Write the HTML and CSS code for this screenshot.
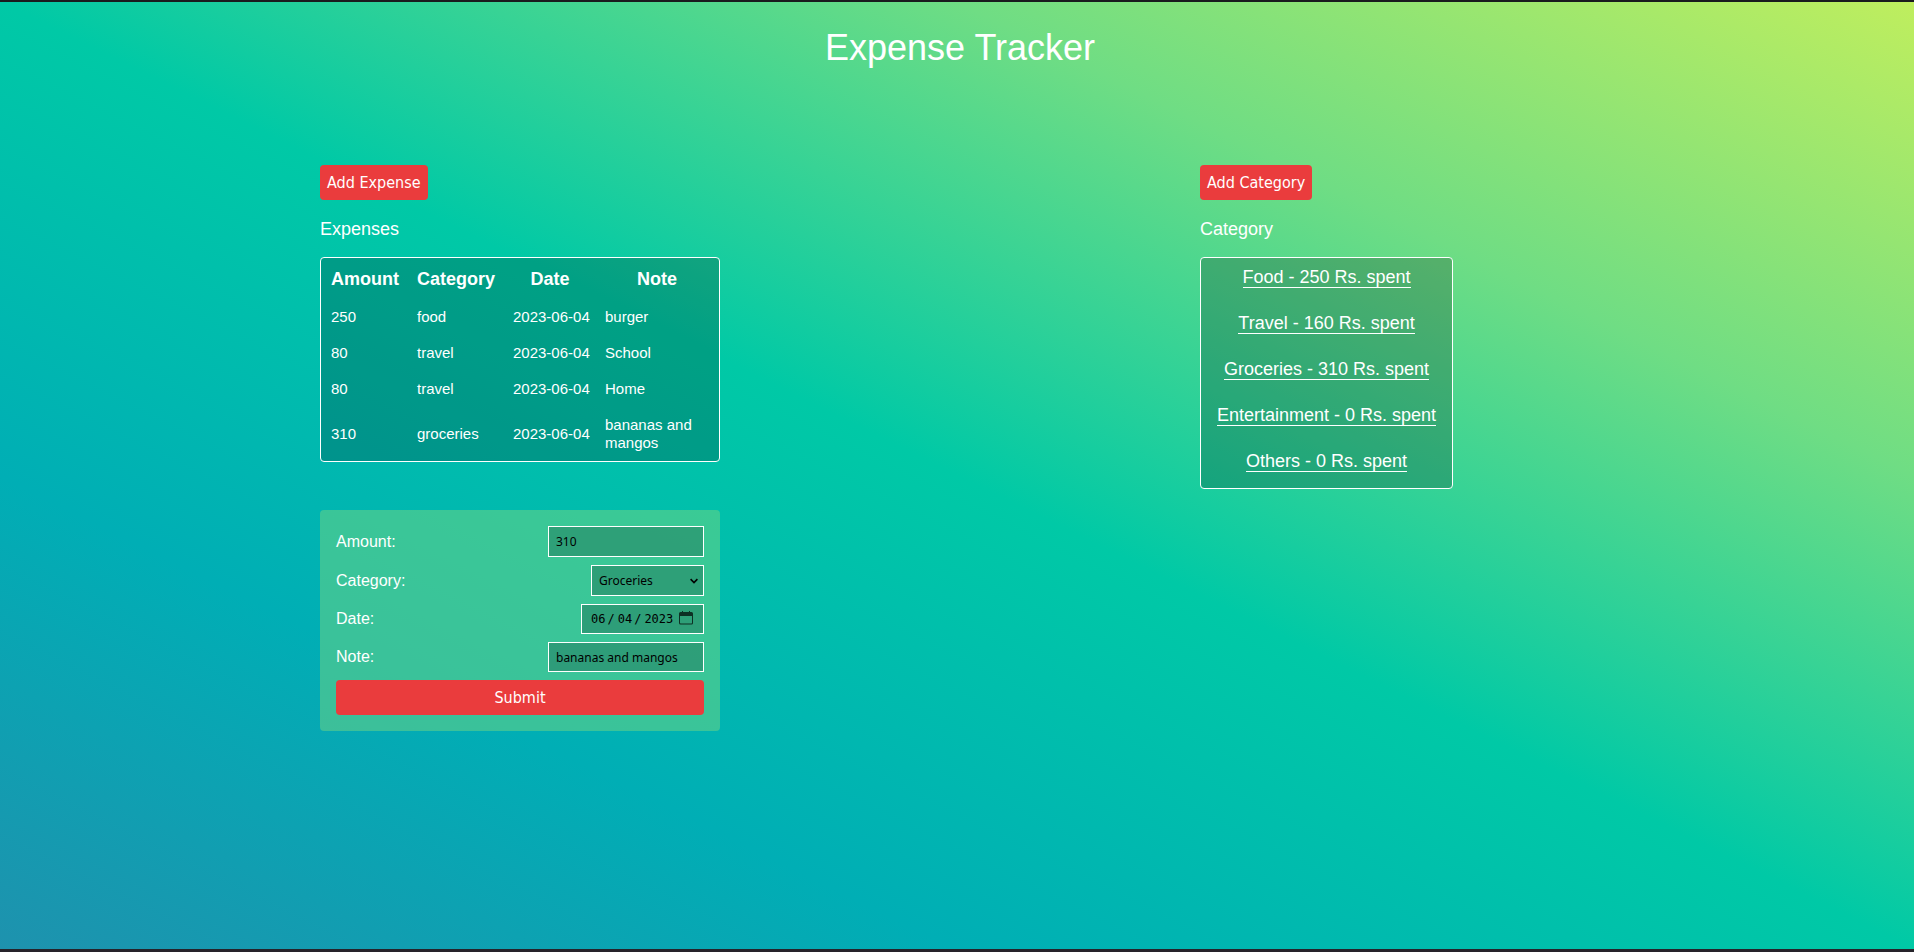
FILE: index.html
```html
<!DOCTYPE html>
<html lang="en">
<head>
<meta charset="utf-8">
<meta name="viewport" content="width=device-width, initial-scale=1">
<title>Expense Tracker</title>
<link rel="stylesheet" href="styles.css">
</head>
<body>
<div class="page">
  <header class="header">
    <h1 class="title">Expense Tracker</h1>
  </header>
  <main class="content">
    <section class="expenses">
      <button class="button" type="button">Add Expense</button>
      <h2 class="heading">Expenses</h2>
      <table class="table">
        <colgroup>
          <col class="col-amount">
          <col class="col-category">
          <col class="col-date">
          <col>
        </colgroup>
        <thead>
          <tr><th>Amount</th><th>Category</th><th>Date</th><th>Note</th></tr>
        </thead>
        <tbody>
          <tr><td>250</td><td>food</td><td class="date">2023-06-04</td><td>burger</td></tr>
          <tr><td>80</td><td>travel</td><td class="date">2023-06-04</td><td>School</td></tr>
          <tr><td>80</td><td>travel</td><td class="date">2023-06-04</td><td>Home</td></tr>
          <tr><td>310</td><td>groceries</td><td class="date">2023-06-04</td><td>bananas and mangos</td></tr>
        </tbody>
      </table>
      <form class="form">
        <div class="row">
          <label for="amount">Amount:</label>
          <input class="field field-text" id="amount" type="text" inputmode="numeric" value="310">
        </div>
        <div class="row">
          <label for="category">Category:</label>
          <span class="select-wrap">
            <select class="field field-select" id="category">
              <option>Food</option>
              <option>Travel</option>
              <option selected>Groceries</option>
              <option>Entertainment</option>
              <option>Others</option>
            </select>
            <svg class="chevron" viewBox="0 0 8 6" aria-hidden="true"><path d="M.6 1.1L4 4.5l3.4-3.4" fill="none" stroke="#000" stroke-width="1.6"/></svg>
          </span>
        </div>
        <div class="row">
          <label for="date">Date:</label>
          <input class="field field-date" id="date" type="date" value="2023-06-04">
        </div>
        <div class="row">
          <label for="note">Note:</label>
          <input class="field field-text field-short" id="note" type="text" value="bananas and mangos">
        </div>
        <button class="button" type="button">Submit</button>
      </form>
    </section>
    <section class="categories">
      <button class="button" type="button">Add Category</button>
      <h2 class="heading">Category</h2>
      <div class="list">
        <a class="item" href="#food">Food - 250 Rs. spent</a>
        <a class="item" href="#travel">Travel - 160 Rs. spent</a>
        <a class="item" href="#groceries">Groceries - 310 Rs. spent</a>
        <a class="item" href="#entertainment">Entertainment - 0 Rs. spent</a>
        <a class="item" href="#others">Others - 0 Rs. spent</a>
      </div>
    </section>
  </main>
</div>
</body>
</html>
```
FILE: styles.css
```css
* {
  box-sizing: border-box;
}

body {
  margin: 0;
  color: #fff;
  font-family: "Liberation Sans", Arial, sans-serif;
  font-size: 16px;
}

.page {
  min-height: 100vh;
  border-top: 2px solid #1a1b1e;
  border-bottom: 3px solid #26232a;
  background: linear-gradient(to right top, #1e92ae, #00aeb5, #00c9a6, #6fdd84, #bfee5e) padding-box;
}

.header {
  padding: 24px 8px 96px 14px;
  text-align: center;
}

.title {
  margin: 0;
  font-size: 36px;
  font-weight: 400;
  line-height: 43px;
}

.content {
  display: flex;
  gap: 480px;
  padding: 0 16px 48px 320px;
}

.expenses {
  flex: 0 0 400px;
}

.heading {
  margin: 18px 0 16px;
  font-size: 18px;
  font-weight: 400;
  line-height: 23px;
}

.button {
  display: block;
  height: 35px;
  padding: 1px 7px 0;
  border: 0;
  border-radius: 4px;
  background: #ea3c3d;
  color: #fff;
  font-family: "DejaVu Sans Condensed", "Noto Sans", sans-serif;
  font-size: 16px;
  line-height: 34px;
  cursor: pointer;
}

.table,
.list {
  border: 1px solid #fff;
  border-radius: 4px;
  background: rgba(0, 0, 0, 0.2);
}

.table {
  width: 100%;
  table-layout: fixed;
  border-spacing: 2px;
  font-size: 15px;
  line-height: 18px;
}

.col-amount {
  width: 84px;
}

.col-category {
  width: 94px;
}

.col-date {
  width: 90px;
}

.table th,
.table td {
  padding: 9px 8px 7px;
  text-align: left;
}

.table th {
  font-size: 18px;
  line-height: 21px;
  text-align: center;
}

.table .date {
  white-space: nowrap;
}

.form {
  display: flex;
  flex-direction: column;
  gap: 8px;
  margin-top: 48px;
  padding: 16px;
  border-radius: 4px;
  background: rgba(116, 214, 128, 0.5);
}

.row {
  display: flex;
  align-items: center;
  justify-content: space-between;
}

.field {
  height: 31px;
  margin: 0;
  padding: 0 7px;
  border: 1px solid #fff;
  border-radius: 0;
  background: rgba(0, 0, 0, 0.2);
  color: #000;
  font-family: "Noto Sans", sans-serif;
  font-size: 12px;
}

.field-text {
  width: 156px;
}

.field-short {
  height: 30px;
}

.select-wrap {
  position: relative;
  display: flex;
}

.field-select {
  width: 113px;
  appearance: none;
}

.chevron {
  position: absolute;
  top: 13px;
  right: 6px;
  width: 8px;
  height: 6px;
  pointer-events: none;
}

.field-date {
  width: 123px;
  height: 30px;
  padding: 0 10px 0 8px;
  font-family: "DejaVu Sans Mono", monospace;
}

.field-date::-webkit-datetime-edit-fields-wrapper {
  padding: 0;
}

.field-date::-webkit-datetime-edit-text {
  padding: 0 2px 0 1px;
}

.field-date::-webkit-calendar-picker-indicator {
  width: 14px;
  height: 14px;
  margin: 0 0 2px;
  padding: 0;
  background: url("data:image/svg+xml,%3Csvg xmlns='http://www.w3.org/2000/svg' viewBox='0 0 14 14'%3E%3Cpath d='M3 0h1v1h6V0h1v1h1.5A1.5 1.5 0 0 1 14 2.500V12a1.500 1.500 0 0 1-1.500 1.500h-11A1.500 1.500 0 0 1 0 12V2.500A1.500 1.500 0 0 1 1.500 1H3zM1 5v7l.5.5h11l.5-.5V5z' fill='%23000' fill-opacity='.7' fill-rule='evenodd'/%3E%3C/svg%3E") center / 14px 14px no-repeat;
}

.list {
  display: flex;
  flex-direction: column;
  align-items: center;
  gap: 24px;
  padding: 8px 16px 16px;
}

.item {
  padding-top: 1px;
  border-bottom: 1px solid #fff;
  color: #fff;
  font-size: 18px;
  line-height: 20px;
  text-decoration: none;
}

@media (max-width: 1500px) {
  .content {
    flex-wrap: wrap;
    justify-content: center;
    gap: 48px;
    padding: 0 16px 48px;
  }
}
```
